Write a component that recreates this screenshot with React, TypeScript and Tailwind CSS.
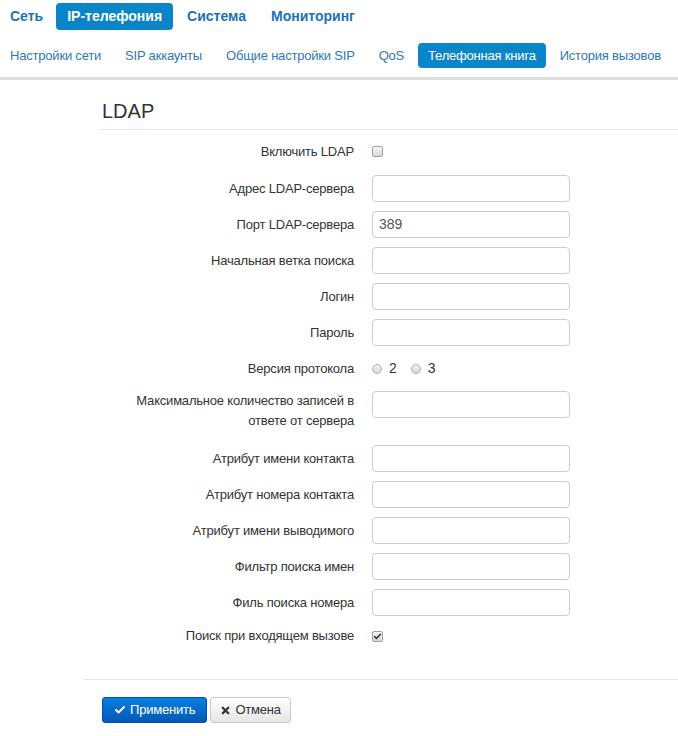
import { Check, X } from "lucide-react";

const topNav = ["Сеть", "IP-телефония", "Система", "Мониторинг"];
const subNav = [
  "Настройки сети",
  "SIP аккаунты",
  "Общие настройки SIP",
  "QoS",
  "Телефонная книга",
  "История вызовов",
];

type Row =
  | { kind: "input"; label: string[]; value?: string }
  | { kind: "check"; label: string; checked?: boolean }
  | { kind: "radio"; label: string };

function Checkbox({ checked }: { checked?: boolean }) {
  return (
    <span className="flex h-[11px] w-[11px] items-center justify-center rounded-[2px] border border-[#a0a0a0] bg-gradient-to-b from-[#f6f6f6] to-[#d8d8d8]">
      {checked && <Check className="h-[9px] w-[9px] text-[#333]" strokeWidth={4} />}
    </span>
  );
}

function Radio() {
  return <span className="inline-block h-[10px] w-[10px] rounded-full border border-[#b0b0b0] bg-gradient-to-b from-[#f2f2f2] to-[#d6d6d6]" />;
}

function TextInput({ value }: { value?: string }) {
  return (
    <div className="flex h-[27px] w-[198px] items-center rounded-[4px] border border-[#ccc] bg-white px-[6px] text-[14px] text-[#555]">
      {value}
    </div>
  );
}

export default function App() {
  return (
    <div className="min-h-[736px] w-full overflow-hidden bg-white text-[#333]" style={{ fontFamily: '"Liberation Sans", Arial, sans-serif' }}>
      {/* top menu */}
      <nav className="flex gap-[3px] pt-[3px]">
        {topNav.map((item) => (
          <span
            key={item}
            className={
              item === "IP-телефония"
                ? "flex h-[27px] items-center whitespace-nowrap rounded-[4px] bg-[#0a86c8] px-[11px] text-[14px] font-bold text-white"
                : "flex h-[27px] items-center whitespace-nowrap px-[11px] text-[14px] font-bold text-[#1a73b6] first:px-[10px]"
            }
          >
            {item}
          </span>
        ))}
      </nav>
      <nav className="mt-[13px] flex gap-[4px] tracking-[-0.2px]">
        {subNav.map((item) => (
          <span
            key={item}
            className={
              item === "Телефонная книга"
                ? "flex h-[25px] shrink-0 items-center whitespace-nowrap rounded-[4px] bg-[#0a86c8] px-[10px] text-[13px] text-white"
                : "flex h-[25px] shrink-0 items-center whitespace-nowrap px-[10px] text-[13px] text-[#2f78b5]"
            }
          >
            {item}
          </span>
        ))}
      </nav>
      <div className="mt-[9px] h-[3px] w-full bg-[#dedede]" />

      <main className="ml-[84px]">
        <div className="ml-[16px]">
          <h3 className="pt-[19px] pl-[2px] text-[20px] leading-[24px] text-[#333]">LDAP</h3>
          <div className="mt-[6px] h-px bg-[#e5e5e5]" />
        </div>

        <form className="mt-[8px] flex flex-col text-[13px] tracking-[-0.2px]">
          {rows.map((row, i) => (
            <div key={i} className={rowClass(row, i)}>
              <div className="w-[270px] text-right leading-[20px]">
                {row.kind === "input" ? row.label.map((l) => <div key={l}>{l}</div>) : row.label}
              </div>
              <div className="ml-[18px] flex items-center tracking-normal">
                {row.kind === "input" && <TextInput value={row.value} />}
                {row.kind === "check" && <Checkbox checked={row.checked} />}
                {row.kind === "radio" && (
                  <div className="flex items-center gap-[7px] text-[14px]">
                    <Radio />
                    <span className="mr-[7px]">2</span>
                    <Radio />
                    <span>3</span>
                  </div>
                )}
              </div>
            </div>
          ))}
        </form>

        <div className="mt-[32px] h-px bg-[#e5e5e5]" />
        <div className="ml-[18px] mt-[17px] flex gap-[3px] tracking-[-0.2px]">
          <button className="flex h-[26px] items-center gap-[4px] rounded-[3px] border border-[#0650a8] bg-gradient-to-b from-[#0c7fde] to-[#0458b5] px-[11px] text-[13px] text-white">
            <Check className="h-[12px] w-[12px]" strokeWidth={4} />
            Применить
          </button>
          <button className="flex h-[26px] items-center gap-[4px] rounded-[3px] border border-[#c8c8c8] bg-gradient-to-b from-white to-[#e6e6e6] px-[9px] text-[13px] text-[#333]">
            <X className="h-[11px] w-[11px]" strokeWidth={5} />
            Отмена
          </button>
        </div>
      </main>
    </div>
  );
}

const rows: Row[] = [
  { kind: "check", label: "Включить LDAP" },
  { kind: "input", label: ["Адрес LDAP-сервера"] },
  { kind: "input", label: ["Порт LDAP-сервера"], value: "389" },
  { kind: "input", label: ["Начальная ветка поиска"] },
  { kind: "input", label: ["Логин"] },
  { kind: "input", label: ["Пароль"] },
  { kind: "radio", label: "Версия протокола" },
  { kind: "input", label: ["Максимальное количество записей в", "ответе от сервера"] },
  { kind: "input", label: ["Атрибут имени контакта"] },
  { kind: "input", label: ["Атрибут номера контакта"] },
  { kind: "input", label: ["Атрибут имени выводимого"] },
  { kind: "input", label: ["Фильтр поиска имен"] },
  { kind: "input", label: ["Филь поиска номера"] },
  { kind: "check", label: "Поиск при входящем вызове", checked: true },
];

function rowClass(row: Row, i: number) {
  if (i === 0) return "flex h-[27px] items-center mb-[10px]";
  if (row.kind === "input" && row.label.length > 1) return "flex items-start h-[40px] mb-[14px]";
  if (row.kind === "check") return "flex h-[22px] items-center";
  return "flex h-[27px] items-center mb-[9px]";
}
